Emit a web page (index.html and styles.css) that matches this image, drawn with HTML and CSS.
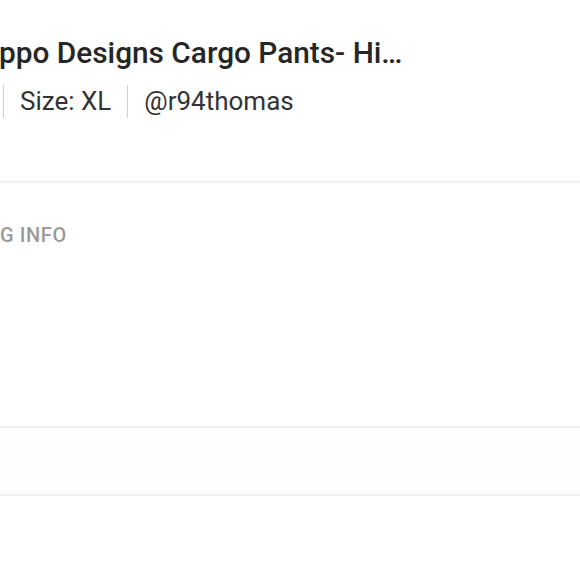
FILE: index.html
```html
<!DOCTYPE html>
<html>
<head>
<meta charset="utf-8">
<link rel="stylesheet" href="styles.css">
</head>
<body>
<div class="page">
  <section class="listing">
    <h1 class="title">ppo Designs Cargo Pants- Hi…</h1>
    <div class="meta">
      <span class="meta-item">Size: XL</span>
      <span class="meta-item">@r94thomas</span>
    </div>
  </section>
  <section class="info">
    <h2 class="info-heading">G INFO</h2>
  </section>
  <section class="row"></section>
  <section class="rest"></section>
</div>
</body>
</html>
```
FILE: styles.css
```css
html, body {
  margin: 0;
  padding: 0;
  background: #ffffff;
}
.page {
  width: 580px;
  height: 580px;
  overflow: hidden;
  font-family: Roboto, "Liberation Sans", sans-serif;
}
.listing {
  padding-top: 37px;
  height: 144px;
  border-bottom: 2px solid #f0f0ee;
}
.title {
  margin: 0 0 0 -1px;
  font-size: 29.8px;
  line-height: 32px;
  font-weight: 500;
  color: #262626;
  white-space: nowrap;
}
.meta {
  display: flex;
  margin-top: 16px;
  margin-left: 3px;
  height: 33px;
  align-items: center;
}
.meta-item {
  border-left: 1.5px solid #cfcfcf;
  padding: 0 16px;
  height: 33px;
  line-height: 33px;
  font-size: 26px;
  color: #333333;
  white-space: nowrap;
}
.info {
  height: 245px;
  border-bottom: 2px solid #f1f1f1;
  box-sizing: border-box;
}
.info-heading {
  margin: 0;
  padding-top: 40px;
  font-size: 20px;
  line-height: 24px;
  font-weight: 500;
  letter-spacing: 0.6px;
  color: #9a9a9a;
}
.row {
  height: 66px;
  background: #fdfdfd;
  border-bottom: 2px solid #f1f1f1;
}
.rest {
  height: 100px;
  background: #ffffff;
}
```
